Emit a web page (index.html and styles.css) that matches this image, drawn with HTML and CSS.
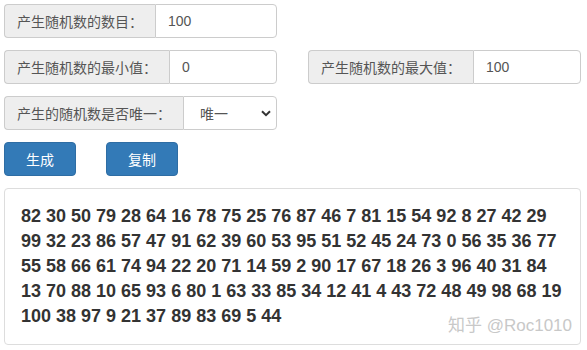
FILE: index.html
```html
<!DOCTYPE html>
<html lang="zh-CN">
<head>
<meta charset="utf-8">
<title>随机数生成</title>
<link rel="stylesheet" href="styles.css">
</head>
<body>
<div class="page">
  <div class="row">
    <div class="group">
      <span class="addon">产生随机数的数目：</span>
      <input class="field" type="text" value="100">
    </div>
  </div>
  <div class="row row-pair">
    <div class="group">
      <span class="addon">产生随机数的最小值：</span>
      <input class="field" type="text" value="0">
    </div>
    <div class="group">
      <span class="addon">产生随机数的最大值：</span>
      <input class="field" type="text" value="100">
    </div>
  </div>
  <div class="row">
    <div class="group">
      <span class="addon">产生的随机数是否唯一：</span>
      <div class="select-wrap">
        <select class="field select">
          <option>唯一</option>
          <option>不唯一</option>
        </select>
        <svg class="chevron" width="10" height="7" viewBox="0 0 10 7"><path d="M1 1.2 L5 5.2 L9 1.2" fill="none" stroke="#333" stroke-width="2"/></svg>
      </div>
    </div>
  </div>
  <div class="row buttons">
    <button class="btn">生成</button>
    <button class="btn">复制</button>
  </div>
  <div class="result">
    <div class="numbers">
      <div class="line">82 30 50 79 28 64 16 78 75 25 76 87 46 7 81 15 54 92 8 27 42 29</div>
      <div class="line">99 32 23 86 57 47 91 62 39 60 53 95 51 52 45 24 73 0 56 35 36 77</div>
      <div class="line">55 58 66 61 74 94 22 20 71 14 59 2 90 17 67 18 26 3 96 40 31 84</div>
      <div class="line">13 70 88 10 65 93 6 80 1 63 33 85 34 12 41 4 43 72 48 49 98 68 19</div>
      <div class="line">100 38 97 9 21 37 89 83 69 5 44</div>
    </div>
    <span class="watermark">知乎 @Roc1010</span>
  </div>
</div>
</body>
</html>
```
FILE: styles.css
```css
* { box-sizing: border-box; }
html, body { margin: 0; padding: 0; background: #fff; }
body {
  font-family: "Liberation Sans", Arial, "Noto Sans CJK SC", sans-serif;
  font-size: 14px;
  color: #333;
}
.page {
  padding: 4px 0 0 4px;
  width: 581px;
  display: flex;
  flex-direction: column;
  gap: 12px;
}
.row { display: flex; }
.row-pair { gap: 31px; }
.group {
  display: flex;
  width: 273px;
  height: 34px;
}
.addon {
  display: flex;
  align-items: center;
  padding: 0 12px;
  background: #eee;
  border: 1px solid #ccc;
  border-right: 0;
  border-radius: 4px 0 0 4px;
  color: #555;
  font-size: 14px;
  white-space: nowrap;
  font-family: "Noto Sans CJK SC", sans-serif;
}
.field {
  flex: 1;
  min-width: 0;
  height: 34px;
  margin: 0;
  padding: 0 12px;
  border: 1px solid #ccc;
  border-radius: 0 4px 4px 0;
  background: #fff;
  color: #555;
  font-family: "Liberation Sans", Arial, "Noto Sans CJK SC", sans-serif;
  font-size: 14px;
  outline: none;
}
.select-wrap {
  position: relative;
  flex: 1;
  display: flex;
}
.select {
  -webkit-appearance: none;
  appearance: none;
  padding-left: 16px;
  font-family: "Noto Sans CJK SC", sans-serif;
}
.chevron {
  position: absolute;
  right: 6px;
  top: 14px;
  pointer-events: none;
}
.buttons { gap: 30px; }
.btn {
  width: 72px;
  height: 34px;
  margin: 0;
  padding: 0;
  background: #337ab7;
  border: 1px solid #2e6da4;
  border-radius: 4px;
  color: #fff;
  font-family: "Noto Sans CJK SC", sans-serif;
  font-size: 14px;
}
.result {
  position: relative;
  width: 577px;
  border: 1px solid #ddd;
  border-radius: 4px;
  padding: 15px 15px 15px 16px;
  background: #fff;
}
.numbers {
  display: flex;
  flex-direction: column;
  align-items: flex-start;
  font-family: "Liberation Sans", Arial, sans-serif;
  font-size: 18px;
  font-weight: bold;
  line-height: 25px;
  color: #333;
}
.line { white-space: nowrap; }
.watermark {
  position: absolute;
  right: 8px;
  bottom: 8px;
  font-family: "Liberation Sans", Arial, "Noto Sans CJK SC", sans-serif;
  font-size: 17px;
  color: #c8c8c8;
}
```
